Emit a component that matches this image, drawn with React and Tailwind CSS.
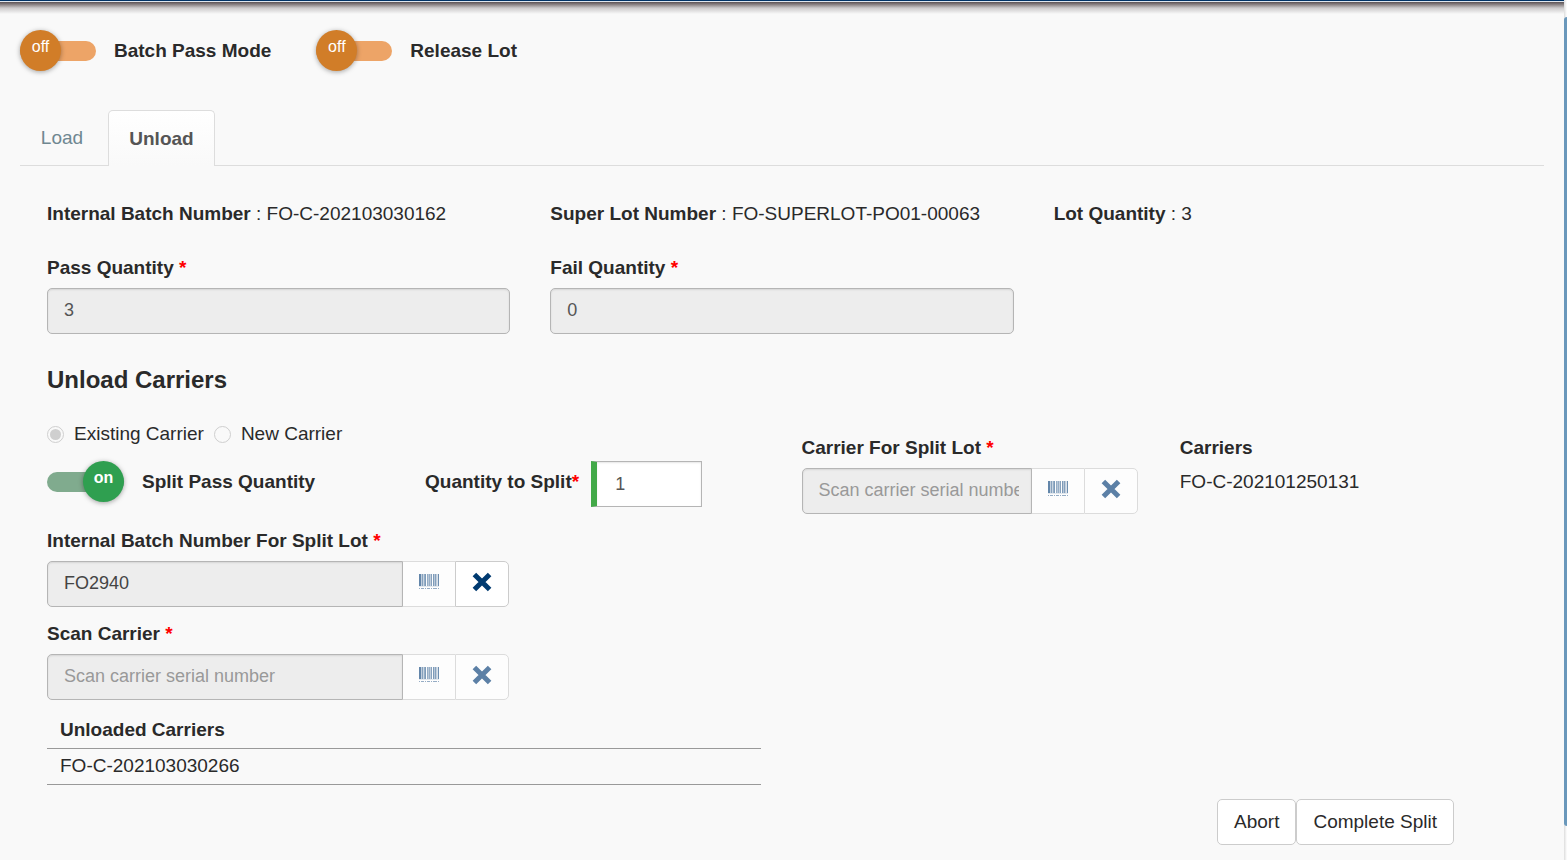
import { useState } from "react";

function Required() {
  return <span className="font-bold text-[#ff0000]">*</span>;
}

function Toggle({ on, label }) {
  const [active, setActive] = useState(on);
  return (
    <label className="flex h-[41px] cursor-pointer items-center gap-[18px] font-bold">
      <input
        type="checkbox"
        className="peer sr-only"
        checked={active}
        onChange={(e) => setActive(e.target.checked)}
      />
      {active ? (
        <span className="flex h-5 w-[77px] items-center justify-end rounded-full bg-[#80ab8e]">
          <span className="flex size-[41px] shrink-0 justify-center rounded-full bg-[#2f9f50] pt-[5px] text-base leading-6 text-white shadow-[0_1px_5px_rgba(0,0,0,0.35)]">
            on
          </span>
        </span>
      ) : (
        <span className="flex h-5 w-[76px] items-center rounded-full bg-[#eda467]">
          <span className="flex size-[41px] shrink-0 justify-center rounded-full bg-[#d17d28] pt-[5px] text-base leading-6 font-normal text-white shadow-[0_1px_5px_rgba(0,0,0,0.35)]">
            off
          </span>
        </span>
      )}
      {label}
    </label>
  );
}

function BarcodeIcon() {
  const bars = [
    [0, 2, 0.9], [2, 1, 0.35], [3, 1, 0.7], [4, 1, 0.3], [5, 1, 0.6], [6, 1, 0.75], [8, 1, 0.6],
    [9, 1, 0.4], [10, 1, 0.6], [11, 1, 0.35], [12, 1, 0.7], [14, 1, 0.75], [15, 1, 0.4],
    [16, 1, 0.7], [17, 1, 0.35], [18, 1, 0.2], [19, 1, 0.85],
  ];
  return (
    <svg width="20" height="16" viewBox="0 0 20 16" shapeRendering="crispEdges" aria-hidden="true">
      {bars.map(([x, w, o]) => (
        <rect key={x} x={x} y="0" width={w} height="12" fill="#5279a1" opacity={o} />
      ))}
      <path d="M0 12.5H20" stroke="#5279a1" strokeWidth="1" opacity="0.15" />
      <path
        d="M0 14.5H1M2 14.5H5M6 14.5H7M8 14.5H11M12 14.5H13M14 14.5H18M19 14.5H20"
        stroke="#5279a1"
        strokeWidth="1"
        opacity="0.6"
      />
    </svg>
  );
}

function CrossIcon({ strong }) {
  return (
    <svg width="20" height="20" viewBox="0 0 20 20" aria-hidden="true">
      <path
        d="M2.4 2.4 17.6 17.6M17.6 2.4 2.4 17.6"
        stroke={strong ? "#003a70" : "#5c80a6"}
        strokeWidth="5"
      />
    </svg>
  );
}

function ScanField({ id, label, value, placeholder, clearable }) {
  return (
    <div>
      <label htmlFor={id} className="block font-bold">
        {label} <Required />
      </label>
      <div className="mt-2 flex h-[46px]">
        <input
          id={id}
          disabled
          defaultValue={value}
          placeholder={placeholder}
          className="min-w-0 flex-1 rounded-l-[5px] border border-[#b5b5b5] bg-[#ededed] pr-3 pb-0.5 pl-4 text-lg text-[#444] shadow-[inset_0_1px_2px_rgba(0,0,0,0.1)] placeholder:text-[#999]"
        />
        <button
          type="button"
          disabled
          aria-label="Scan barcode"
          className="flex w-[52px] items-center justify-center border-y border-[#dcdcdc] bg-[#fdfdfd] pb-1"
        >
          <BarcodeIcon />
        </button>
        <button
          type="button"
          disabled={!clearable}
          aria-label="Clear"
          className={
            clearable
              ? "flex w-[54px] items-center justify-center rounded-r-[5px] border border-[#cccccc] bg-white pb-1"
              : "flex w-[54px] items-center justify-center rounded-r-[5px] border border-[#dcdcdc] bg-[#fdfdfd] pb-1"
          }
        >
          <CrossIcon strong={clearable} />
        </button>
      </div>
    </div>
  );
}

function QuantityField({ id, label, value }) {
  return (
    <div>
      <label htmlFor={id} className="block font-bold">
        {label} <Required />
      </label>
      <input
        id={id}
        disabled
        defaultValue={value}
        className="mt-2 h-[46px] w-full rounded-[5px] border border-[#b5b5b5] bg-[#ededed] px-4 pb-0.5 text-lg text-[#555] shadow-[inset_0_1px_2px_rgba(0,0,0,0.1)]"
      />
    </div>
  );
}

function CarrierRadio({ label, checked }) {
  return (
    <label className="flex items-center gap-2.5">
      <input
        type="radio"
        name="carrier"
        disabled
        defaultChecked={checked}
        className="flex size-[17px] appearance-none items-center justify-center rounded-full border border-[#cfcfcf] before:size-[11px] before:rounded-full checked:before:bg-[#cfcfcf]"
      />
      {label}
    </label>
  );
}

export default function App() {
  return (
    <div className="flex min-h-screen bg-[#f9f9f9] font-['Liberation_Sans',Arial,sans-serif] text-[19px] leading-6 text-[#2a2a2a]">
      <div className="flex min-w-0 flex-1 flex-col">
        <header className="h-0.5 border-t border-[#003366] bg-[#dfe6ee]" />
        <div className="h-3 bg-linear-to-b from-[#5c5254] via-[#cccacb] to-[#f9f9f9]" />
        <main className="px-5 pt-4">
          <div className="flex gap-[45px]">
            <Toggle label="Batch Pass Mode" />
            <Toggle label="Release Lot" />
          </div>

          <nav className="mt-[39px] flex border-b border-[#dddddd]">
            <button type="button" className="w-[88px] pr-1 text-[#6f8791]">
              Load
            </button>
            <button
              type="button"
              className="-mb-px h-14 w-[107px] rounded-t-[5px] border border-b-0 border-[#dddddd] bg-linear-to-b from-white to-[#f9f9f9] font-bold text-[#555]"
            >
              Unload
            </button>
          </nav>

          <div className="pl-[27px] pt-9">
            <section className="grid grid-cols-[463fr_463fr_490fr] gap-x-10 gap-y-[30px]">
              <p>
                <b>Internal Batch Number</b> : FO-C-202103030162
              </p>
              <p>
                <b>Super Lot Number</b> : FO-SUPERLOT-PO01-00063
              </p>
              <p>
                <b>Lot Quantity</b> : 3
              </p>
              <QuantityField id="pass" label="Pass Quantity" value="3" />
              <QuantityField id="fail" label="Fail Quantity" value="0" />
            </section>

            <h2 className="mt-8 text-2xl leading-7 font-bold">Unload Carriers</h2>

            <section className="mt-7 flex">
              <div className="w-1/2 shrink-0">
                <fieldset className="flex gap-2.5">
                  <CarrierRadio label="Existing Carrier" checked />
                  <CarrierRadio label="New Carrier" />
                </fieldset>
                <div className="mt-[15px] flex items-start">
                  <div className="w-[378px]">
                    <Toggle on label="Split Pass Quantity" />
                  </div>
                  <label htmlFor="split" className="leading-[41px] font-bold">
                    Quantity to Split
                    <Required />
                  </label>
                  <input
                    id="split"
                    defaultValue="1"
                    className="ml-3 h-[46px] w-[111px] border border-l-[6px] border-[#b5b5b5] border-l-[#42a948] bg-white px-[18px] text-lg text-[#555] shadow-[inset_0_1px_2px_rgba(0,0,0,0.1)]"
                  />
                </div>
                <div className="mt-[22px] flex w-[462px] flex-col gap-[15px]">
                  <ScanField id="batch" label="Internal Batch Number For Split Lot" value="FO2940" clearable />
                  <ScanField id="scan" label="Scan Carrier" placeholder="Scan carrier serial number" />
                </div>
                <table className="mt-3 w-[714px] text-left">
                  <thead>
                    <tr className="border-b border-[#999]">
                      <th className="h-9 px-[13px]">Unloaded Carriers</th>
                    </tr>
                  </thead>
                  <tbody>
                    <tr className="border-b border-[#999]">
                      <td className="h-9 px-[13px]">FO-C-202103030266</td>
                    </tr>
                  </tbody>
                </table>
              </div>
              <div className="w-1/4 pt-[14px] pl-1.5">
                <div className="w-[336px]">
                  <ScanField id="split-carrier" label="Carrier For Split Lot" placeholder="Scan carrier serial number" />
                </div>
              </div>
              <div className="w-1/4 pt-[14px] pl-2.5">
                <h3 className="font-bold">Carriers</h3>
                <p className="mt-2.5">FO-C-202101250131</p>
              </div>
            </section>

            <div className="mt-[14px] mr-[90px] flex justify-end">
              <button type="button" className="h-[46px] rounded-[5px] border border-[#cccccc] bg-white px-4">
                Abort
              </button>
              <button type="button" className="h-[46px] rounded-[5px] border border-[#cccccc] bg-white px-4">
                Complete Split
              </button>
            </div>
          </div>
        </main>
      </div>
      <div className="flex w-[3px] shrink-0 bg-linear-to-r from-[#dddddd] to-white pt-[17px] pb-[34px]">
        <div className="w-full rounded-l-sm bg-[#6a98bb]" />
      </div>
    </div>
  );
}
